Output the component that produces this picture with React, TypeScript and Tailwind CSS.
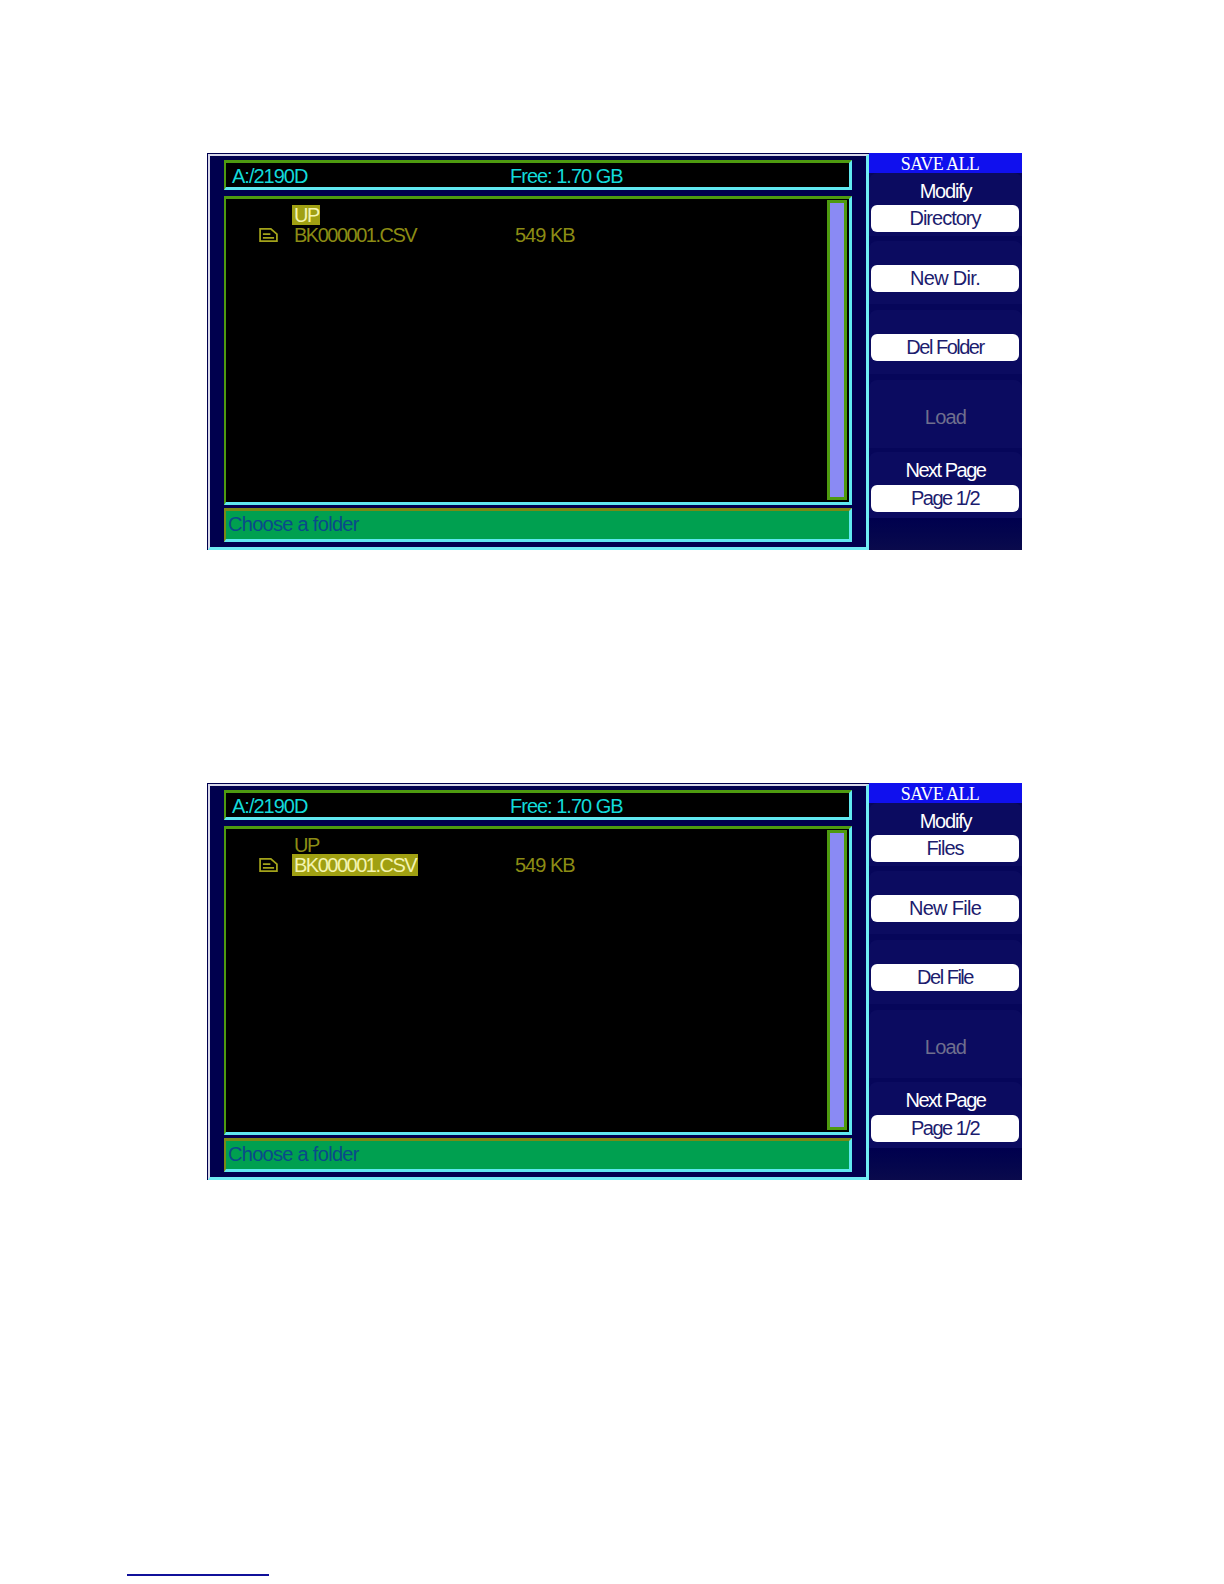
const font = 'font-["Liberation_Sans",Arial,sans-serif]'

function FileIcon() {
  return (
    <svg width="19" height="14" viewBox="0 0 20 15" fill="none" stroke="#a3a31a" strokeWidth="1.9">
      <path d="M1 1H12.5L19 6.5V14H1Z" />
      <path d="M4 6.5H12M4 10.5H16" />
    </svg>
  )
}

function MenuButton({ label, className = 'tracking-[-1.4px]' }: { label: string; className?: string }) {
  return (
    <div className={`ml-[2px] mr-[3px] h-[27px] rounded-[6px] bg-white text-center text-[20px] leading-[26px] text-[#1c1c6e] ${className}`}>
      {label}
    </div>
  )
}

function Section({ className, children }: { className: string; children?: React.ReactNode }) {
  return <div className={`rounded-t-[8px] bg-[#0b0b60] ${className}`}>{children}</div>
}

function Sidebar({ buttons }: { buttons: string[] }) {
  return (
    <div className="flex w-[153px] flex-col bg-[#06065a]">
      <div className="h-[20px] bg-[#1010ee] pr-[11px] text-center font-['Liberation_Serif',serif] text-[18px] leading-[23px] tracking-[-0.6px] text-white">
        SAVE ALL
      </div>
      <Section className="h-[63px]">
        <div className="h-[32px] text-center text-[20px] leading-[36px] tracking-[-1.2px] text-white">Modify</div>
        <MenuButton label={buttons[0]} className="tracking-[-1px]" />
      </Section>
      <Section className="mt-[5px] h-[63px] pt-[24px]">
        <MenuButton label={buttons[1]} className="tracking-[-0.7px]" />
      </Section>
      <Section className="mt-[6px] h-[64px] pt-[24px]">
        <MenuButton label={buttons[2]} className="tracking-[-1.5px]" />
      </Section>
      <Section className="mt-[6px] h-[68px] pt-[24px] text-center text-[20px] leading-[26px] tracking-[-0.8px] text-[#6f6f8e]">
        Load
      </Section>
      <Section className="mt-[4px] h-[66px]">
        <div className="h-[33px] text-center text-[20px] leading-[36px] tracking-[-1.5px] text-white">Next Page</div>
        <MenuButton label="Page 1/2" className="tracking-[-1.5px]" />
      </Section>
      <div className="flex-1 bg-gradient-to-b from-[#00004e] to-[#0a0a4c]" />
    </div>
  )
}

function Screen({ selected, buttons }: { selected: 'up' | 'file'; buttons: string[] }) {
  return (
    <div className="flex h-[397px] w-[815px]">
      <div className="h-full w-[662px] border-t border-l border-[#00004e]">
        <div className="h-full border-t-2 border-l-2 border-r-[3px] border-b-[3px] border-t-[#d8d8e8] border-l-[#d8d8e8] border-r-[#70ecf4] border-b-[#70ecf4] bg-[#00004e] pt-[4px] pl-[14px] pr-[14px]">
          <div className="flex h-[30px] border-t-[3px] border-l-2 border-r-[3px] border-b-[3px] border-t-[#4e9a10] border-l-[#4e9a10] border-r-[#60e8f0] border-b-[#60e8f0] bg-black text-[20px] leading-[26px] tracking-[-1px] text-[#12dada]">
            <span className="w-[284px] pl-[6px]">A:/2190D</span>
            <span>Free: 1.70 GB</span>
          </div>
          <div className="mt-[6px] flex h-[309px] border-t-[3px] border-l-2 border-r-[3px] border-b-[3px] border-t-[#4e9a10] border-l-[#4e9a10] border-r-[#60e8f0] border-b-[#60e8f0] bg-black">
            <div className="flex-1 pt-[6px] text-[20px] leading-[20px] tracking-[-1.5px] text-[#8c8c14]">
              <div className="flex h-[20px] pl-[66px]">
                <span className={selected === 'up' ? 'bg-[#a0a012] pl-[2px] pr-[1px] text-[#f4f4b0]' : 'px-[2px]'}>UP</span>
              </div>
              <div className="flex h-[20px] items-center">
                <span className="ml-[33px] mr-[13px] flex w-[20px]">
                  <FileIcon />
                </span>
                <span className="w-[223px]">
                  <span className={selected === 'file' ? 'bg-[#a0a012] px-[2px] text-[#f4f4b0]' : 'px-[2px]'}>BK000001.CSV</span>
                </span>
                <span className="tracking-[-1px]">549 KB</span>
              </div>
            </div>
            <div className="mr-[2px] mt-[1px] h-[300px] w-[20px] border-[3px] border-[#4e9a10] bg-[#8a8af4]" />
          </div>
          <div className="mt-[3px] h-[34px] border-t-[3px] border-l-2 border-r-[3px] border-b-[3px] border-t-[#7a8a14] border-l-[#7a8a14] border-r-[#60e8f0] border-b-[#60e8f0] bg-[#00a050] pl-[2px] text-[20px] leading-[27px] tracking-[-0.7px] text-[#0a4a8a]">
            Choose a folder
          </div>
        </div>
      </div>
      <Sidebar buttons={buttons} />
    </div>
  )
}

export default function App() {
  return (
    <div className={`h-[1584px] w-[1224px] overflow-hidden bg-white ${font}`}>
      <div className="pl-[207px] pt-[153px]">
        <Screen selected="up" buttons={['Directory', 'New Dir.', 'Del Folder']} />
        <div className="mt-[233px]">
          <Screen selected="file" buttons={['Files', 'New File', 'Del File']} />
        </div>
      </div>
      <div className="ml-[127px] mt-[394px] h-[2px] w-[142px] bg-[#10109a]" />
    </div>
  )
}
